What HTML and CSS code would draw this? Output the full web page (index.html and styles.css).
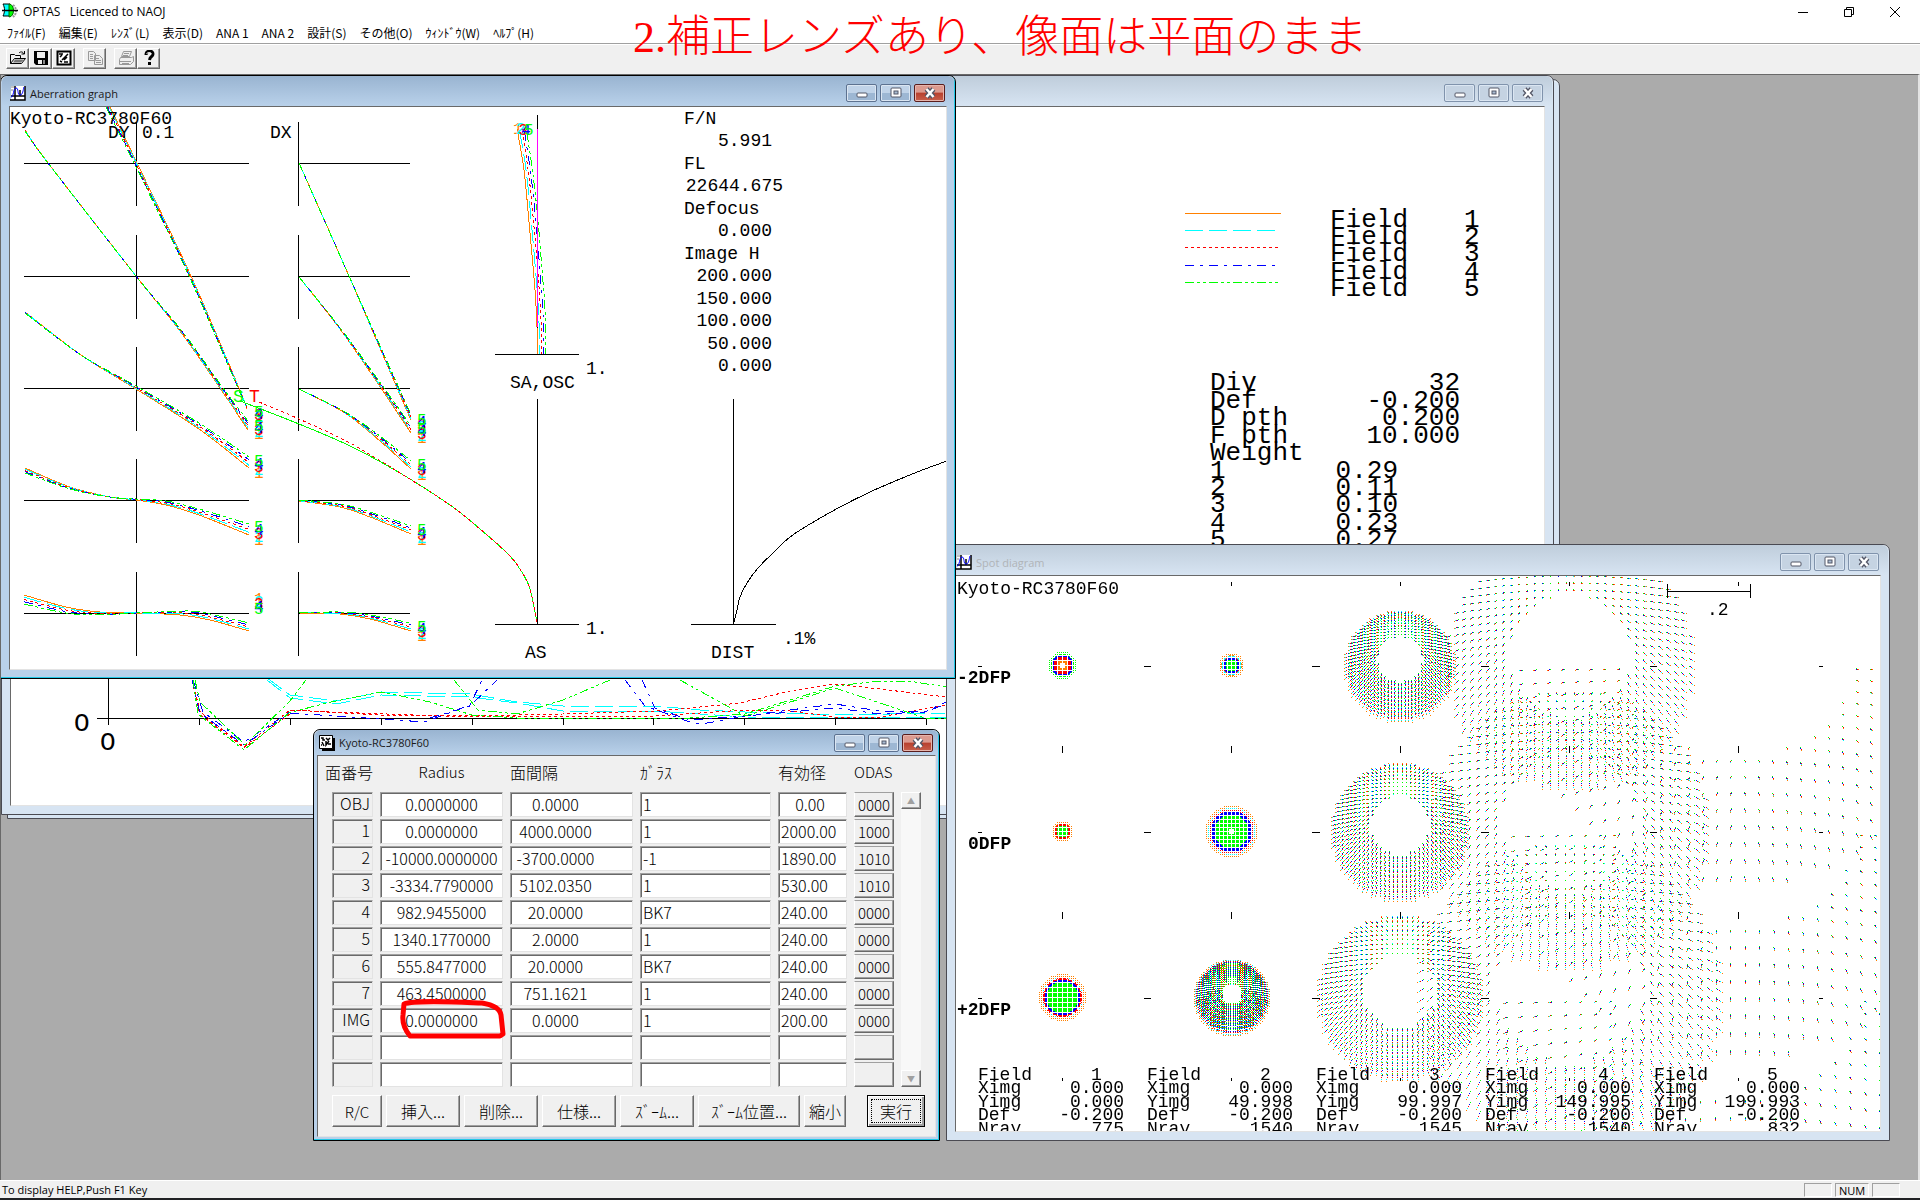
FILE: index.html
```html
<!DOCTYPE html>
<html lang="ja">
<head>
  <meta charset="UTF-8">
  <meta name="viewport" content="width=device-width, initial-scale=1.0">
  <title>OPTAS Licenced to NAOJ</title>
  <link rel="stylesheet" href="styles.css">
</head>
<body>
  <svg class="defs" aria-hidden="true">
    <symbol id="ico-min" viewBox="0 0 14 12"><rect x="2" y="6" width="10" height="4" rx="1" fill="#fff" stroke="#535666"/></symbol>
    <symbol id="ico-max" viewBox="0 0 14 12"><rect x="2" y="1" width="10" height="9" rx="1" fill="#fff" stroke="#535666"/><rect x="5" y="4" width="4" height="3" fill="#a9bcd2" stroke="#535666"/></symbol>
    <symbol id="ico-close" viewBox="0 0 14 12"><path d="M3.500 2l7 8M10.500 2l-7 8" stroke="#535666" stroke-width="5"/><path d="M3.500 2l7 8M10.500 2l-7 8" stroke="#fff" stroke-width="2.500"/></symbol>
    <symbol id="ico-graph" viewBox="0 0 16 16"><path d="M1 1h14v14H1z" fill="#fff"/><path d="M0 15h15V1M5 1v14M1 11h14M10 5v6" fill="none" stroke="#000" stroke-width="1.500"/><path d="M1 12c3 0 2-9 5-9s1 7 4 7 3-5 4-8" fill="none" stroke="#00f"/><path d="M1 2h3M1 5h2" stroke="#888"/></symbol>
    <symbol id="ico-lens" viewBox="0 0 16 16"><path d="M3 3h13v13H3z"/><path d="M.5.500h13v13H.5z" fill="#fff" stroke="#000"/><path d="M2 3h2v2h2M7 3l2 2 2-2M3 7l2 4M7 6v4l3-4M9 9h3M2 10h1" fill="none" stroke="#000" stroke-width="1.500"/></symbol>
  </svg>

  <header class="titlebar">
    <svg class="app-icon" viewBox="0 0 16 18" aria-hidden="true">
      <path d="M1 2h7v12H1c2-4 2-8 0-12z" fill="#0ff" stroke="#000"/>
      <path d="M7 2c6 0 6 13 0 13z" fill="#0f0" stroke="#060"/>
      <path d="M11 3c4 3 4 9 0 12" fill="none" stroke="#999" stroke-width="2" stroke-dasharray="2 1"/>
      <path d="M0 8.500h16" stroke="#000" stroke-width="1.500"/>
    </svg>
    <h1 class="app-name">OPTAS&nbsp;&nbsp; Licenced to NAOJ</h1>
    <div class="app-controls">
      <button type="button" aria-label="最小化"><svg viewBox="0 0 12 12"><path d="M1 6.500h10"/></svg></button>
      <button type="button" aria-label="元に戻す"><svg viewBox="0 0 12 12"><path d="M1.500 3.500h7v7h-7zM3.500 3.500v-2h7v7h-2"/></svg></button>
      <button type="button" aria-label="閉じる"><svg viewBox="0 0 12 12"><path d="M1 1l10 10M11 1L1 11"/></svg></button>
    </div>
  </header>

  <nav class="menubar">
    <button type="button">ﾌｧｲﾙ(F)</button>
    <button type="button">編集(E)</button>
    <button type="button">ﾚﾝｽﾞ(L)</button>
    <button type="button">表示(D)</button>
    <button type="button">ANA 1</button>
    <button type="button">ANA 2</button>
    <button type="button">設計(S)</button>
    <button type="button">その他(O)</button>
    <button type="button">ｳｨﾝﾄﾞｳ(W)</button>
    <button type="button">ﾍﾙﾌﾟ(H)</button>
  </nav>

  <div class="toolbar">
    <div class="tool-group">
      <button type="button" aria-label="開く"><svg viewBox="0 0 18 16"><path d="M1.500 13.500v-9h4l1 1h5v3M1.500 13.500l4-5h11l-4 5z" fill="none" stroke="#000"/><path d="M6 9.500h9l-3 3H4z" fill="#777"/><path d="M10 3c2-2 4-1 5 1M15.500 1v3h-3" fill="none" stroke="#000"/></svg></button>
      <button type="button" aria-label="保存"><svg viewBox="0 0 18 16"><path d="M2 1h14v14H4l-2-2z"/><path d="M5 2h8v6H5zM6 10h4v4H6z" fill="#eee"/><path d="M11 10h2v4h-2z" fill="#888"/></svg></button>
      <button type="button" aria-label="レンズデータ"><svg viewBox="0 0 18 16"><path d="M2.500 1.500h13v13h-13z" fill="#fff" stroke="#000" stroke-width="2"/><path d="M4 4h4M5 7l2-2M13 4l-6 6M9 12h4M5 11l2 1M12 7l-3 3" fill="none" stroke="#000" stroke-width="1.500"/></svg></button>
    </div>
    <div class="tool-group">
      <button type="button" disabled aria-label="コピー"><svg viewBox="0 0 18 16"><path d="M2.500 1.500h5l2 2v7h-7zM8.500 5.500h5l3 3v6h-8z" fill="#eee" stroke="#999"/><path d="M4 4.500h3M4 6.500h3M4 8.500h3M10 8.500h3M10 10.500h5M10 12.500h5" stroke="#999"/></svg></button>
    </div>
    <div class="tool-group">
      <button type="button" disabled aria-label="印刷"><svg viewBox="0 0 18 16"><path d="M6.500 1.500h8l-2 5h-8zM3.500 7.500h11l2-1v5l-3 3h-11v-5z" fill="#eee" stroke="#999"/><path d="M7 3.500h5M6 5.500h5M3 11.500h11M5 13.500h7" stroke="#999"/></svg></button>
      <button type="button" aria-label="ヘルプ"><svg viewBox="0 0 18 16"><path d="M6 5c0-5 7-5 7-1 0 3-3 2-3.500 6" fill="none" stroke="#000" stroke-width="3"/><path d="M8 12h3v3H8z"/><path d="M6.500 4c1-2 4-2 5 0" fill="none" stroke="#fff"/></svg></button>
    </div>
  </div>

  <main class="mdi">
    <section class="window window-back" aria-hidden="true"></section>

    <section class="window window-mtf">
      <header class="caption">
        <div class="caption-buttons">
          <button type="button" aria-label="最小化"><svg><use href="#ico-min"/></svg></button>
          <button type="button" aria-label="最大化"><svg><use href="#ico-max"/></svg></button>
          <button type="button" aria-label="閉じる"><svg><use href="#ico-close"/></svg></button>
        </div>
      </header>
      <div class="client">
        <svg class="plot" viewBox="11 107 1533 698" preserveAspectRatio="xMinYMin slice">
          <g id="legend" class="large"></g>
          <g class="large">
            <text x="1210" y="390">Div</text><text class="end" x="1460" y="390">32</text>
            <text x="1210" y="408">Def</text><text class="end" x="1460" y="408">-0.200</text>
            <text x="1210" y="425">D pth</text><text class="end" x="1460" y="425">0.200</text>
            <text x="1210" y="443">F pth</text><text class="end" x="1460" y="443">10.000</text>
            <text x="1210" y="460">Weight</text>
            <text x="1210" y="478">1</text><text class="end" x="1398" y="478">0.29</text>
            <text x="1210" y="495">2</text><text class="end" x="1398" y="495">0.11</text>
            <text x="1210" y="512">3</text><text class="end" x="1398" y="512">0.10</text>
            <text x="1210" y="530">4</text><text class="end" x="1398" y="530">0.23</text>
            <text x="1210" y="547">5</text><text class="end" x="1398" y="547">0.27</text>
            <text x="74" y="731">O</text><text x="100" y="750">O</text>
          </g>
          <path class="axis" d="M97 718.500H1544M108.500 600v125M199.500 719v6M290.500 719v6M381.500 719v6M472.500 719v6M563.500 719v6M653.500 719v6M744.500 719v6M835.500 719v6M926.500 719v6"/>
          <g id="mtf"></g>
        </svg>
      </div>
    </section>

    <section class="window window-spot">
      <header class="caption">
        <svg class="caption-icon"><use href="#ico-graph"/></svg>
        <h2>Spot diagram</h2>
        <div class="caption-buttons">
          <button type="button" aria-label="最小化"><svg><use href="#ico-min"/></svg></button>
          <button type="button" aria-label="最大化"><svg><use href="#ico-max"/></svg></button>
          <button type="button" aria-label="閉じる"><svg><use href="#ico-close"/></svg></button>
        </div>
      </header>
      <div class="client">
        <canvas id="spots" width="924" height="555"></canvas>
        <svg class="plot" viewBox="956 576 924 555" preserveAspectRatio="xMinYMin slice">
          <text x="957" y="594">Kyoto-RC3780F60</text>
          <g class="bold">
            <text x="957" y="683">-2DFP</text>
            <text x="968" y="849">0DFP</text>
            <text x="957" y="1015">+2DFP</text>
          </g>
          <path class="axis" d="M1667.500 584v14M1750.500 584v14M1667 591.500h83"/>
          <text x="1707" y="615">.2</text>
          <g id="spot-ticks"></g>
          <g id="spot-labels"></g>
        </svg>
      </div>
    </section>

    <section class="window window-aberration active">
      <header class="caption">
        <svg class="caption-icon"><use href="#ico-graph"/></svg>
        <h2>Aberration graph</h2>
        <div class="caption-buttons">
          <button type="button" aria-label="最小化"><svg><use href="#ico-min"/></svg></button>
          <button type="button" aria-label="最大化"><svg><use href="#ico-max"/></svg></button>
          <button type="button" class="close" aria-label="閉じる"><svg><use href="#ico-close"/></svg></button>
        </div>
      </header>
      <div class="client">
        <svg class="plot" viewBox="10 107 937 562" preserveAspectRatio="xMinYMin slice">
          <g id="aberration-axes"></g>
          <path class="axis" d="M537.500 115v240M495 354.500h84M537.500 399v226M495 624.500h84M733.500 399v226M691 624.500h85"/>
          <g id="aberration"></g>
          <text x="10" y="124">Kyoto-RC3780F60</text>
          <text x="108" y="138">DY</text><text x="142" y="138">0.1</text>
          <text x="270" y="138">DX</text>
          <text x="233" y="402" fill="#00ff00">S</text><text x="249" y="402" fill="#ff0000">T</text>
          <text x="586" y="374">1.</text><text x="510" y="388">SA,OSC</text>
          <text x="586" y="634">1.</text><text x="525" y="658">AS</text>
          <text x="783" y="644">.1%</text><text x="711" y="658">DIST</text>
          <text x="684" y="124">F/N</text><text class="end" x="772" y="146">5.991</text>
          <text x="684" y="169">FL</text><text class="end" x="783" y="191">22644.675</text>
          <text x="684" y="214">Defocus</text><text class="end" x="772" y="236">0.000</text>
          <text x="684" y="259">Image H</text>
          <text class="end" x="772" y="281">200.000</text>
          <text class="end" x="772" y="304">150.000</text>
          <text class="end" x="772" y="326">100.000</text>
          <text class="end" x="772" y="349">50.000</text>
          <text class="end" x="772" y="371">0.000</text>
        </svg>
      </div>
    </section>

    <section class="window window-lens active">
      <header class="caption">
        <svg class="caption-icon"><use href="#ico-lens"/></svg>
        <h2>Kyoto-RC3780F60</h2>
        <div class="caption-buttons">
          <button type="button" aria-label="最小化"><svg><use href="#ico-min"/></svg></button>
          <button type="button" aria-label="最大化"><svg><use href="#ico-max"/></svg></button>
          <button type="button" class="close" aria-label="閉じる"><svg><use href="#ico-close"/></svg></button>
        </div>
      </header>
      <div class="client">
        <div class="lens-data">
          <table class="lens-table">
            <colgroup><col class="c-no"><col class="c-len"><col class="c-len"><col class="c-glass"><col class="c-dia"><col class="c-odas"></colgroup>
            <thead>
              <tr><th scope="col">面番号</th><th scope="col" class="latin center">Radius</th><th scope="col">面間隔</th><th scope="col">ｶﾞﾗｽ</th><th scope="col">有効径</th><th scope="col" class="latin">ODAS</th></tr>
            </thead>
            <tbody id="lens-rows"></tbody>
          </table>
          <div class="scrollbar">
            <button type="button" disabled aria-label="上へ">▲</button>
            <button type="button" disabled aria-label="下へ">▼</button>
          </div>
        </div>
        <div class="lens-buttons">
          <button type="button" class="b-rc">R/C</button>
          <button type="button">挿入...</button>
          <button type="button">削除...</button>
          <button type="button">仕様...</button>
          <button type="button">ｽﾞｰﾑ...</button>
          <button type="button" class="b-wide">ｽﾞｰﾑ位置...</button>
          <button type="button" class="b-small">縮小</button>
          <button type="button" class="b-run"><span>実行</span></button>
        </div>
        <svg class="mark" viewBox="0 0 110 44" aria-hidden="true"><path d="M6 7c10-4 50-2 78-1 12 2 18 6 19 12l2 19-3 2H12C7 33 4 26 5 18z"/></svg>
      </div>
    </section>
  </main>

  <footer class="statusbar">
    <span class="status-text">To display HELP,Push F1 Key</span>
    <span class="pane"></span><span class="pane pane-num">NUM</span><span class="pane"></span>
  </footer>
  <div class="taskbar"></div>

  <p class="slide-title">2.補正レンズあり、像面は平面のまま</p>
  <script src="script.js"></script>
</body>
</html>
```

FILE: styles.css
```css
*, *::before, *::after {
  box-sizing: border-box;
}
body {
  margin: 0;
  height: 100vh;
  display: flex;
  flex-direction: column;
  overflow: hidden;
  background: #fff;
  color: #000;
  font-family: "Open Sans", "Noto Sans CJK JP", sans-serif;
  font-size: 12px;
}
h1, h2, p {
  margin: 0;
  font-weight: normal;
}
button, input {
  font-family: inherit;
  font-size: inherit;
  color: inherit;
  padding: 0;
  margin: 0;
  border-radius: 0;
}
.defs {
  position: absolute;
  width: 0;
  height: 0;
}

/* main frame */
.titlebar {
  flex: none;
  height: 22px;
  display: flex;
  align-items: center;
  padding-left: 2px;
}
.app-icon {
  width: 16px;
  height: 18px;
}
.app-name {
  flex: 1;
  padding-left: 5px;
  font-size: 12px;
}
.app-controls {
  display: flex;
  padding-right: 2px;
}
.app-controls button {
  width: 46px;
  height: 20px;
  border: 0;
  background: none;
}
.app-controls svg {
  width: 12px;
  height: 12px;
  fill: none;
  stroke: #000;
  vertical-align: middle;
}
.menubar {
  flex: none;
  height: 21px;
  display: flex;
  align-items: center;
  gap: 13px;
  padding-left: 7px;
  font-family: "Noto Sans CJK JP", sans-serif;
}
.menubar button {
  border: 0;
  background: none;
  line-height: 20px;
}
.toolbar {
  flex: none;
  height: 31px;
  display: flex;
  gap: 8px;
  padding: 4px 6px;
  background: #f0f0f0;
  border-top: 1px solid #a0a0a0;
  box-shadow: inset 0 1px #fff;
}
.tool-group {
  display: flex;
}
.toolbar button {
  width: 23px;
  height: 21px;
  background: #f0f0f0;
  border: 1px solid;
  border-color: #fff #696969 #696969 #fff;
  box-shadow: inset -1px -1px #a0a0a0;
}
.toolbar svg {
  width: 18px;
  height: 16px;
  vertical-align: top;
}
.mdi {
  flex: 1;
  position: relative;
  overflow: hidden;
  background: #ababab;
  border-top: 1px solid #696969;
  border-left: 1px solid #696969;
  border-right: 2px solid #e3e3e3;
}
.statusbar {
  flex: none;
  height: 18px;
  display: flex;
  align-items: center;
  gap: 3px;
  padding: 0 20px 0 2px;
  background: #f0f0f0;
  border-top: 1px solid #fff;
  font-size: 11px;
  line-height: 16px;
}
.status-text {
  flex: 1;
}
.pane {
  width: 28px;
  height: 14px;
  border: 1px solid;
  border-color: #a0a0a0 #fff #fff #a0a0a0;
}
.pane-num {
  width: 34px;
  text-align: center;
  line-height: 14px;
}
.taskbar {
  flex: none;
  height: 2px;
  background: #202124;
}
.slide-title {
  position: absolute;
  left: 633px;
  top: 8px;
  color: #f00;
  font-family: "Liberation Serif", "Noto Sans CJK JP", serif;
  font-size: 44px;
  font-weight: 300;
  line-height: 60px;
  white-space: nowrap;
}

/* child windows */
.window {
  position: absolute;
  display: flex;
  flex-direction: column;
  padding: 0 8px 8px;
  background: #d7e4f2;
  border: 1px solid #4a4a52;
  border-radius: 7px 7px 0 0;
  box-shadow: inset 0 1px #f4f8fc;
}
.window.active {
  background: #b9d1ea;
  border-color: #000;
  box-shadow: inset -1px -1px #22c8e6, inset 0 1px #f4f8fc;
}
.caption {
  flex: none;
  height: 30px;
  display: flex;
  align-items: center;
  margin: 0 -7px;
  padding: 4px 9px 0 8px;
  background: linear-gradient(#bfcddb, #d7e4f2);
  border-radius: 6px 6px 0 0;
}
.active .caption {
  background: linear-gradient(#99b4d1, #b9d1ea);
}
.caption-icon {
  width: 16px;
  height: 16px;
}
.caption h2 {
  padding-left: 4px;
  font-size: 11px;
  color: #b0b4b8;
}
.active .caption h2 {
  color: #1a1a1a;
}
.caption-buttons {
  display: flex;
  gap: 3px;
  margin-left: auto;
}
.caption-buttons button {
  width: 31px;
  height: 18px;
  border: 1px solid #8093ac;
  border-radius: 2px;
  background: #c5d3e2;
  box-shadow: inset 0 0 0 1px #dbe6f2;
}
.active .caption-buttons button {
  border-color: #5d7290;
  background: linear-gradient(#c0d3e8 50%, #9db7d3 50%);
}
.active .caption-buttons .close {
  border-color: #5a1d1d;
  background: linear-gradient(#dc9a8f 45%, #b8402e 50%, #c8604c);
  box-shadow: inset 0 0 0 1px #e6b5ad;
}
.caption-buttons svg {
  width: 14px;
  height: 12px;
  vertical-align: top;
  margin-top: 2px;
}
.client {
  flex: 1;
  position: relative;
  overflow: hidden;
  background: #fff;
  border: 1px solid;
  border-color: #696969 #e3e3e3 #e3e3e3 #696969;
}
.window-back {
  left: 6px;
  top: 4px;
  width: 1553px;
  height: 740px;
}
.window-mtf {
  left: 0;
  top: 0;
  width: 1553px;
  height: 740px;
}
.window-spot {
  left: 945px;
  top: 469px;
  width: 944px;
  height: 597px;
}
.window-aberration {
  left: -1px;
  top: 0;
  width: 956px;
  height: 604px;
}
.window-lens {
  left: 312px;
  top: 654px;
  width: 627px;
  height: 412px;
  padding: 0 3px 3px;
}
.window-lens .caption {
  height: 25px;
  margin: 0 -2px;
  padding: 0 5px 0 4px;
}
.window-lens .client {
  background: #f0f0f0;
}

/* plots */
.plot {
  position: absolute;
  left: 0;
  top: 0;
  width: 100%;
  height: 100%;
  font-family: "Liberation Mono", monospace;
  font-size: 18px;
}
.plot path {
  fill: none;
  shape-rendering: crispEdges;
}
.plot .axis {
  stroke: #000;
}
.plot .large {
  font-size: 26px;
}
.plot .bold {
  font-weight: bold;
}
.plot .digit {
  font-size: 16px;
}
.plot .end {
  text-anchor: end;
}

/* lens data */
.lens-data {
  display: flex;
  align-items: flex-end;
  font-family: "Noto Sans CJK JP", sans-serif;
  font-size: 16px;
  font-weight: 300;
}
.lens-table {
  flex: none;
  width: 583px;
  table-layout: fixed;
  border-collapse: separate;
  border-spacing: 7px 2px;
}
.c-no { width: 48px; }
.c-len { width: 123px; }
.c-glass { width: 131px; }
.c-dia { width: 69px; }
.c-odas { width: 40px; }
.lens-table th, .lens-table td {
  padding: 0;
}
.lens-table thead th {
  height: 32px;
  font-size: 16px;
  font-weight: 300;
  line-height: 28px;
  text-align: left;
  vertical-align: top;
  white-space: nowrap;
}
.lens-table thead .latin {
  font-size: 15px;
}
.lens-table thead .center {
  text-align: center;
}
.lens-table tbody th {
  padding-left: 7px;
  font-weight: 300;
}
.field, .row-name, .odas {
  display: block;
  width: 100%;
  height: 25px;
  line-height: 21px;
  border: 1px solid;
  border-color: #a0a0a0 #e3e3e3 #e3e3e3 #a0a0a0;
  box-shadow: inset 1px 1px #696969;
  font-weight: inherit;
}
.field {
  background: #fff;
  padding: 0 2px 2px;
}
.field.radius {
  text-align: center;
}
.field.thick {
  text-align: center;
  padding-right: 34px;
}
.row-name {
  padding-right: 2px;
  text-align: right;
}
.odas {
  background: #f0f0f0;
  border-color: #a0a0a0 #696969 #696969 #fff;
  box-shadow: inset -1px -1px #a0a0a0;
  font-size: 15px;
  text-align: center;
}
.scrollbar {
  width: 20px;
  height: 295px;
  margin-bottom: 2px;
  display: flex;
  flex-direction: column;
  justify-content: space-between;
  background: #f8f8f8;
}
.scrollbar button {
  height: 17px;
  border: 1px solid;
  border-color: #fff #696969 #696969 #fff;
  box-shadow: inset -1px -1px #a0a0a0;
  background: #f0f0f0;
  color: #a0a0a0;
  font-size: 8px;
  line-height: 10px;
}
.lens-buttons {
  display: flex;
  gap: 4px;
  padding: 6px 10px 0 14px;
  font-family: "Noto Sans CJK JP", sans-serif;
  font-size: 16px;
}
.lens-buttons button {
  flex: none;
  width: 74px;
  height: 32px;
  background: #f0f0f0;
  border: 1px solid;
  border-color: #fff #696969 #696969 #fff;
  box-shadow: inset -1px -1px #a0a0a0;
  font-weight: 300;
  white-space: nowrap;
}
.lens-buttons .b-rc {
  width: 50px;
  font-size: 15px;
}
.lens-buttons .b-wide {
  width: 102px;
}
.lens-buttons .b-small {
  width: 42px;
}
.lens-buttons .b-run {
  width: 58px;
  margin-left: auto;
  border-color: #000;
  box-shadow: inset 1px 1px #fff, inset -2px -2px #a0a0a0;
}
.b-run span {
  display: block;
  margin: 2px 3px 3px;
  border: 1px dotted #000;
  line-height: 22px;
}
.mark {
  position: absolute;
  left: 80px;
  top: 241px;
  width: 110px;
  height: 44px;
  fill: none;
  stroke: #f00;
  stroke-width: 5;
  stroke-linejoin: round;
  pointer-events: none;
}
```

FILE: script.js
```js
const NS = 'http://www.w3.org/2000/svg'
const COLORS = ['#ff8000', '#00ffff', '#ff0000', '#0000ff', '#00ff00']
const DASHES = ['', '18 6', '3 3', '9 6 3 6', '9 3 3 3 3 3']

function add(parent, name, attrs, text) {
  const el = document.createElementNS(NS, name)
  for (const key in attrs) el.setAttribute(key, attrs[key])
  if (text !== undefined) el.textContent = text
  parent.appendChild(el)
  return el
}

// smooth curve through the points
function curve(pts) {
  let d = `M${pts[0]}`
  for (let i = 0; i < pts.length - 1; i++) {
    const a = pts[Math.max(i - 1, 0)]
    const b = pts[i]
    const c = pts[i + 1]
    const e = pts[Math.min(i + 2, pts.length - 1)]
    d += `C${b[0] + (c[0] - a[0]) / 6} ${b[1] + (c[1] - a[1]) / 6} ${c[0] - (e[0] - b[0]) / 6} ${c[1] - (e[1] - b[1]) / 6} ${c[0]} ${c[1]}`
  }
  return d
}

function stroke(parent, d, k) {
  add(parent, 'path', { d, stroke: COLORS[k], 'stroke-dasharray': DASHES[k] })
}

// five wavelengths between the first and the last curve
function bundle(parent, first, last) {
  COLORS.forEach((c, k) => {
    const t = k / 4
    stroke(parent, curve(first.map((p, i) => [p[0] + (last[i][0] - p[0]) * t, p[1] + (last[i][1] - p[1]) * t])), k)
  })
}

function digits(parent, x1, y1, x5, y5) {
  COLORS.forEach((fill, k) => {
    add(parent, 'text', { class: 'digit', x: x1 + (x5 - x1) * k / 4, y: y1 + (y5 - y1) * k / 4, fill }, k + 1)
  })
}

// aberration graph
const axes = document.querySelector('#aberration-axes')
const rowY = [163.5, 276.5, 388.5, 500.5, 613.5]
rowY.forEach(y => {
  add(axes, 'path', { class: 'axis', d: `M24 ${y}h225M136.5 ${y - 42}v84M298.5 ${y - 42}v84M298 ${y}h112` })
})

const ab = document.querySelector('#aberration')
bundle(ab, [[110, 107], [137, 163], [191, 276], [239, 388], [247, 409]], [[106, 107], [134, 163], [189, 276], [238, 388], [247, 406]])
bundle(ab, [[25, 130], [48, 163], [136, 276], [180, 331], [220, 388], [248, 430]], [[25, 131], [48, 163], [136, 276], [182, 331], [223, 388], [248, 421]])
bundle(ab, [[25, 312], [81, 355], [136, 389], [199, 429], [249, 468]], [[25, 313], [81, 355], [136, 386], [199, 423], [249, 457]])
bundle(ab, [[25, 468], [70, 487], [110, 497], [136, 500], [166, 505], [199, 515], [249, 535]], [[25, 473], [70, 489], [110, 497], [136, 499], [166, 501], [199, 509], [249, 524]])
bundle(ab, [[24, 595], [66, 607], [100, 612], [136, 613], [180, 615], [210, 620], [249, 631]], [[24, 604], [66, 613], [100, 615], [136, 613], [190, 611], [210, 614], [249, 623]])
bundle(ab, [[299, 163], [349, 276], [397, 388], [411, 420]], [[299, 163], [349, 276], [399, 388], [411, 414]])
bundle(ab, [[299, 277], [340, 329], [381, 388], [411, 433]], [[299, 277], [341, 329], [384, 388], [411, 426]])
bundle(ab, [[299, 389], [345, 413], [380, 441], [411, 469]], [[299, 389], [345, 412], [380, 436], [411, 461]])
bundle(ab, [[299, 501], [340, 507], [370, 517], [411, 534]], [[299, 500], [340, 504], [370, 512], [411, 526]])
bundle(ab, [[299, 613], [340, 614], [370, 619], [411, 631]], [[299, 613], [340, 612], [370, 615], [411, 623]])
bundle(ab, [[517, 129], [524, 170], [530, 233], [535, 290], [537, 327], [537, 354]], [[527, 133], [533, 175], [538, 220], [542, 270], [545, 310], [546, 354]])
add(ab, 'path', { d: 'M537.5 129v198', stroke: '#ff00ff' })

digits(ab, 254, 423, 254, 417)
digits(ab, 254, 439, 254, 431)
digits(ab, 254, 478, 254, 466)
digits(ab, 254, 545, 254, 532)
digits(ab, 254, 604, 254, 614)
digits(ab, 417, 434, 417, 425)
digits(ab, 417, 443, 417, 434)
digits(ab, 417, 480, 417, 470)
digits(ab, 417, 545, 417, 535)
digits(ab, 417, 641, 417, 632)
digits(ab, 513, 134, 524, 135)

const tail = [[400, 473], [450, 505], [480, 529], [510, 556], [523, 574], [530, 589], [537, 622]]
add(ab, 'path', { d: curve([[240, 401], [299, 424], [350, 446], ...tail]), stroke: COLORS[4] })
add(ab, 'path', { d: curve([[259, 402], [299, 419], [350, 443], ...tail]), stroke: COLORS[2], 'stroke-dasharray': '3 3' })
add(ab, 'path', { d: curve([[734, 622], [737, 610], [740, 597], [747, 583], [758, 568], [775, 551], [790, 537], [810, 524], [840, 507], [870, 492], [900, 479], [925, 469], [947, 461]]), stroke: '#000' })

// legend
const legend = document.querySelector('#legend')
const legendY = [213.5, 230.5, 247.5, 265.5, 282.5]
legendY.forEach((y, k) => {
  stroke(legend, `M1185 ${y}h96`, k)
  add(legend, 'text', { x: 1330, y: y + 13.5 }, 'Field')
  add(legend, 'text', { x: 1464, y: y + 13.5 }, k + 1)
})

// lower graph
const mtf = document.querySelector('#mtf')
const lines = [
  [1, 'M267 680L290 698L336 704L381 695L470 697L517 703L563 711L655 711L745 717L946 718'],
  [1, 'M267 678L290 695L336 701L381 692L470 694L517 702L563 706L655 706L700 710L745 712L835 715L946 713'],
  [2, 'M192 680L199 711L244 747L290 710L381 715L472 716L563 714L655 711L690 708L740 703L790 691L835 684L880 689L946 697'],
  [2, 'M192 680L201 715L244 748L290 714M290 710L330 712L472 717L655 716L745 710L790 711L835 717L880 717L925 709L946 705'],
  [3, 'M192 680L200 713L244 745L290 713L381 719L425 722L470 705L482 680M625 680L645 706L690 722L702 724L745 716L835 708L880 714L925 712L946 702'],
  [3, 'M193 680L203 712L244 742L290 712M430 718L470 706L497 680M642 680L655 708L690 720L745 716L835 704L880 711L925 712L946 704'],
  [4, 'M195 680L200 702L245 745L290 701L306 680M454 680L478 710L517 714L563 700L610 680M680 680L745 716L800 699L835 688L880 703L925 718L946 719'],
  [4, 'M193 680L198 714L244 750L289 713L326 703L381 692L430 702L472 715L517 718L690 718L745 714L800 697L835 686L880 681L915 682L946 687']
]
lines.forEach(([k, d]) => stroke(mtf, d, k))

// spot diagram labels
const colX = [1062.5, 1231.5, 1400.5, 1569.5, 1738.5]
const spotY = [666, 832, 998]
const ticks = document.querySelector('#spot-ticks')
colX.forEach((x, i) => {
  const top = i === 0 ? '' : `M${x} 582v4`
  add(ticks, 'path', { class: 'axis', d: `${top}M${x} 746v7M${x} 912v7M${x} 1078v3` })
})
spotY.forEach(y => {
  add(ticks, 'path', { class: 'axis', d: `M978 ${y}.5h4M1144 ${y}.5h7M1312 ${y}.5h8M1481 ${y}.5h8M1650 ${y}.5h7M1819 ${y}.5h4` })
})

const labels = document.querySelector('#spot-labels')
const names = ['Ximg', 'Yimg', 'Def', 'Nray']
const values = [
  ['0.000', '0.000', '-0.200', '775'],
  ['0.000', '49.998', '-0.200', '1540'],
  ['0.000', '99.997', '-0.200', '1545'],
  ['0.000', '149.995', '-0.200', '1540'],
  ['0.000', '199.993', '-0.200', '832']
]
values.forEach((list, i) => {
  const x = 978 + i * 169
  add(labels, 'text', { x, y: 1080 }, 'Field')
  add(labels, 'text', { x: x + 113, y: 1080 }, i + 1)
  list.forEach((value, j) => {
    const y = [1093, 1107, 1120, 1134][j]
    add(labels, 'text', { x, y }, names[j])
    add(labels, 'text', { class: 'end', x: x + 146, y }, value)
  })
})

const ctx = document.querySelector('#spots').getContext('2d')
function spot(s) {
  const n = 16
  COLORS.forEach((color, k) => {
    ctx.fillStyle = color
    const scale = 1 - s.spread * k
    for (let i = -n; i < n; i++) {
      for (let j = -n; j < n; j++) {
        const u = (i + 0.5) / n
        const v = (j + 0.5) / n
        const rho = Math.hypot(u, v)
        if (rho > 1 || rho < s.hole || (s.half && v < 0)) continue
        const lift = s.lift * (1 - rho * rho) / (1 - s.hole * s.hole) * (s.half ? Math.min(1, v * 2) : 1)
        const x = s.x + s.r * scale * u
        const y = s.y + s.r * scale * v - lift - s.r * (1 - scale) * s.coma
        ctx.fillRect(Math.floor(x - 956), Math.floor(y - 576), 1, 1)
      }
    }
  })
}

// small spots: the wavelengths merge into rings, [radius, color] from outside in
function rings(s) {
  const last = s.rings[0][0]
  for (let dx = -last; dx <= last; dx++) {
    for (let dy = -last; dy <= last; dy++) {
      const d = Math.hypot(dx, dy)
      if (d > last || d < s.hole) continue
      const gap = d > last * 0.8 ? 2 : s.gap
      if (dx % gap === 0 || dy % gap === 0) continue
      const ring = s.rings.filter(r => d <= r[0]).pop()
      ctx.fillStyle = COLORS[ring[1]]
      ctx.fillRect(s.x - 956 + dx, s.y - 576 + dy, 1, 1)
    }
  }
}
const merged = [
  { x: 1062, y: 665, hole: 3, gap: 5, rings: [[14, 4], [11, 3], [9, 2], [6, 0]] },
  { x: 1062, y: 831, hole: 0, gap: 4, rings: [[11, 0], [8, 2], [6, 4]] },
  { x: 1062, y: 997, hole: 0, gap: 5, rings: [[24, 0], [21, 1], [20, 2], [18, 3], [16, 4]] },
  { x: 1231, y: 665, hole: 0, gap: 4, rings: [[13, 0], [10, 1], [9, 2], [8, 3], [6, 4]] },
  { x: 1231, y: 831, hole: 3, gap: 4, rings: [[26, 0], [24, 1], [23, 2], [21, 3], [17, 4]] }
]
merged.forEach(rings)

const spots = [
  { x: 1232, y: 998, r: 39, spread: 0.03, hole: 0.28, lift: 3, coma: 0.3 },
  { x: 1400, y: 667, r: 57, spread: 0.02, hole: 0.41, lift: 6, coma: 0.5 },
  { x: 1400, y: 833, r: 71, spread: 0.016, hole: 0.43, lift: 6, coma: 0.5 },
  { x: 1400, y: 999, r: 85, spread: 0.014, hole: 0.44, lift: 6, coma: 0.5 },
  { x: 1570, y: 666, r: 128, spread: 0.009, hole: 0.48, lift: 8, coma: 0.7 },
  { x: 1570, y: 832, r: 143, spread: 0.009, hole: 0.48, lift: 8, coma: 0.7 },
  { x: 1570, y: 998, r: 157, spread: 0.009, hole: 0.48, lift: 8, coma: 0.7 },
  { x: 1738, y: 664, r: 226, spread: 0.004, hole: 0.51, lift: 22, coma: 0.2, half: true },
  { x: 1738, y: 830, r: 234, spread: 0.004, hole: 0.51, lift: 22, coma: 0.2, half: true },
  { x: 1738, y: 996, r: 242, spread: 0.004, hole: 0.51, lift: 22, coma: 0.2, half: true }
]
spots.forEach(spot)

// lens data rows
const rows = [
  ['OBJ', '0.0000000', '0.0000', '1', '    0.00', '0000'],
  ['1', '0.0000000', '4000.0000', '1', '2000.00', '1000'],
  ['2', '-10000.0000000', '-3700.0000', '-1', '1890.00', '1010'],
  ['3', '-3334.7790000', '5102.0350', '1', '530.00', '1010'],
  ['4', '982.9455000', '20.0000', 'BK7', '240.00', '0000'],
  ['5', '1340.1770000', '2.0000', '1', '240.00', '0000'],
  ['6', '555.8477000', '20.0000', 'BK7', '240.00', '0000'],
  ['7', '463.4500000', '751.1621', '1', '240.00', '0000'],
  ['IMG', '0.0000000', '0.0000', '1', '200.00', '0000'],
  ['', '', '', '', '', ''],
  ['', '', '', '', '', '']
]
const kinds = [['radius', 'Radius'], ['thick', '面間隔'], ['glass', 'ガラス'], ['dia', '有効径']]
document.querySelector('#lens-rows').innerHTML = rows.map(row => `
  <tr>
    <th scope="row"><span class="row-name">${row[0]}</span></th>
    ${kinds.map(([kind, label], i) => `<td><input type="text" class="field ${kind}" aria-label="${label} ${row[0]}" value="${row[i + 1]}"></td>`).join('')}
    <td><button type="button" class="odas" aria-label="ODAS ${row[0]}">${row[5]}</button></td>
  </tr>`).join('')
```
